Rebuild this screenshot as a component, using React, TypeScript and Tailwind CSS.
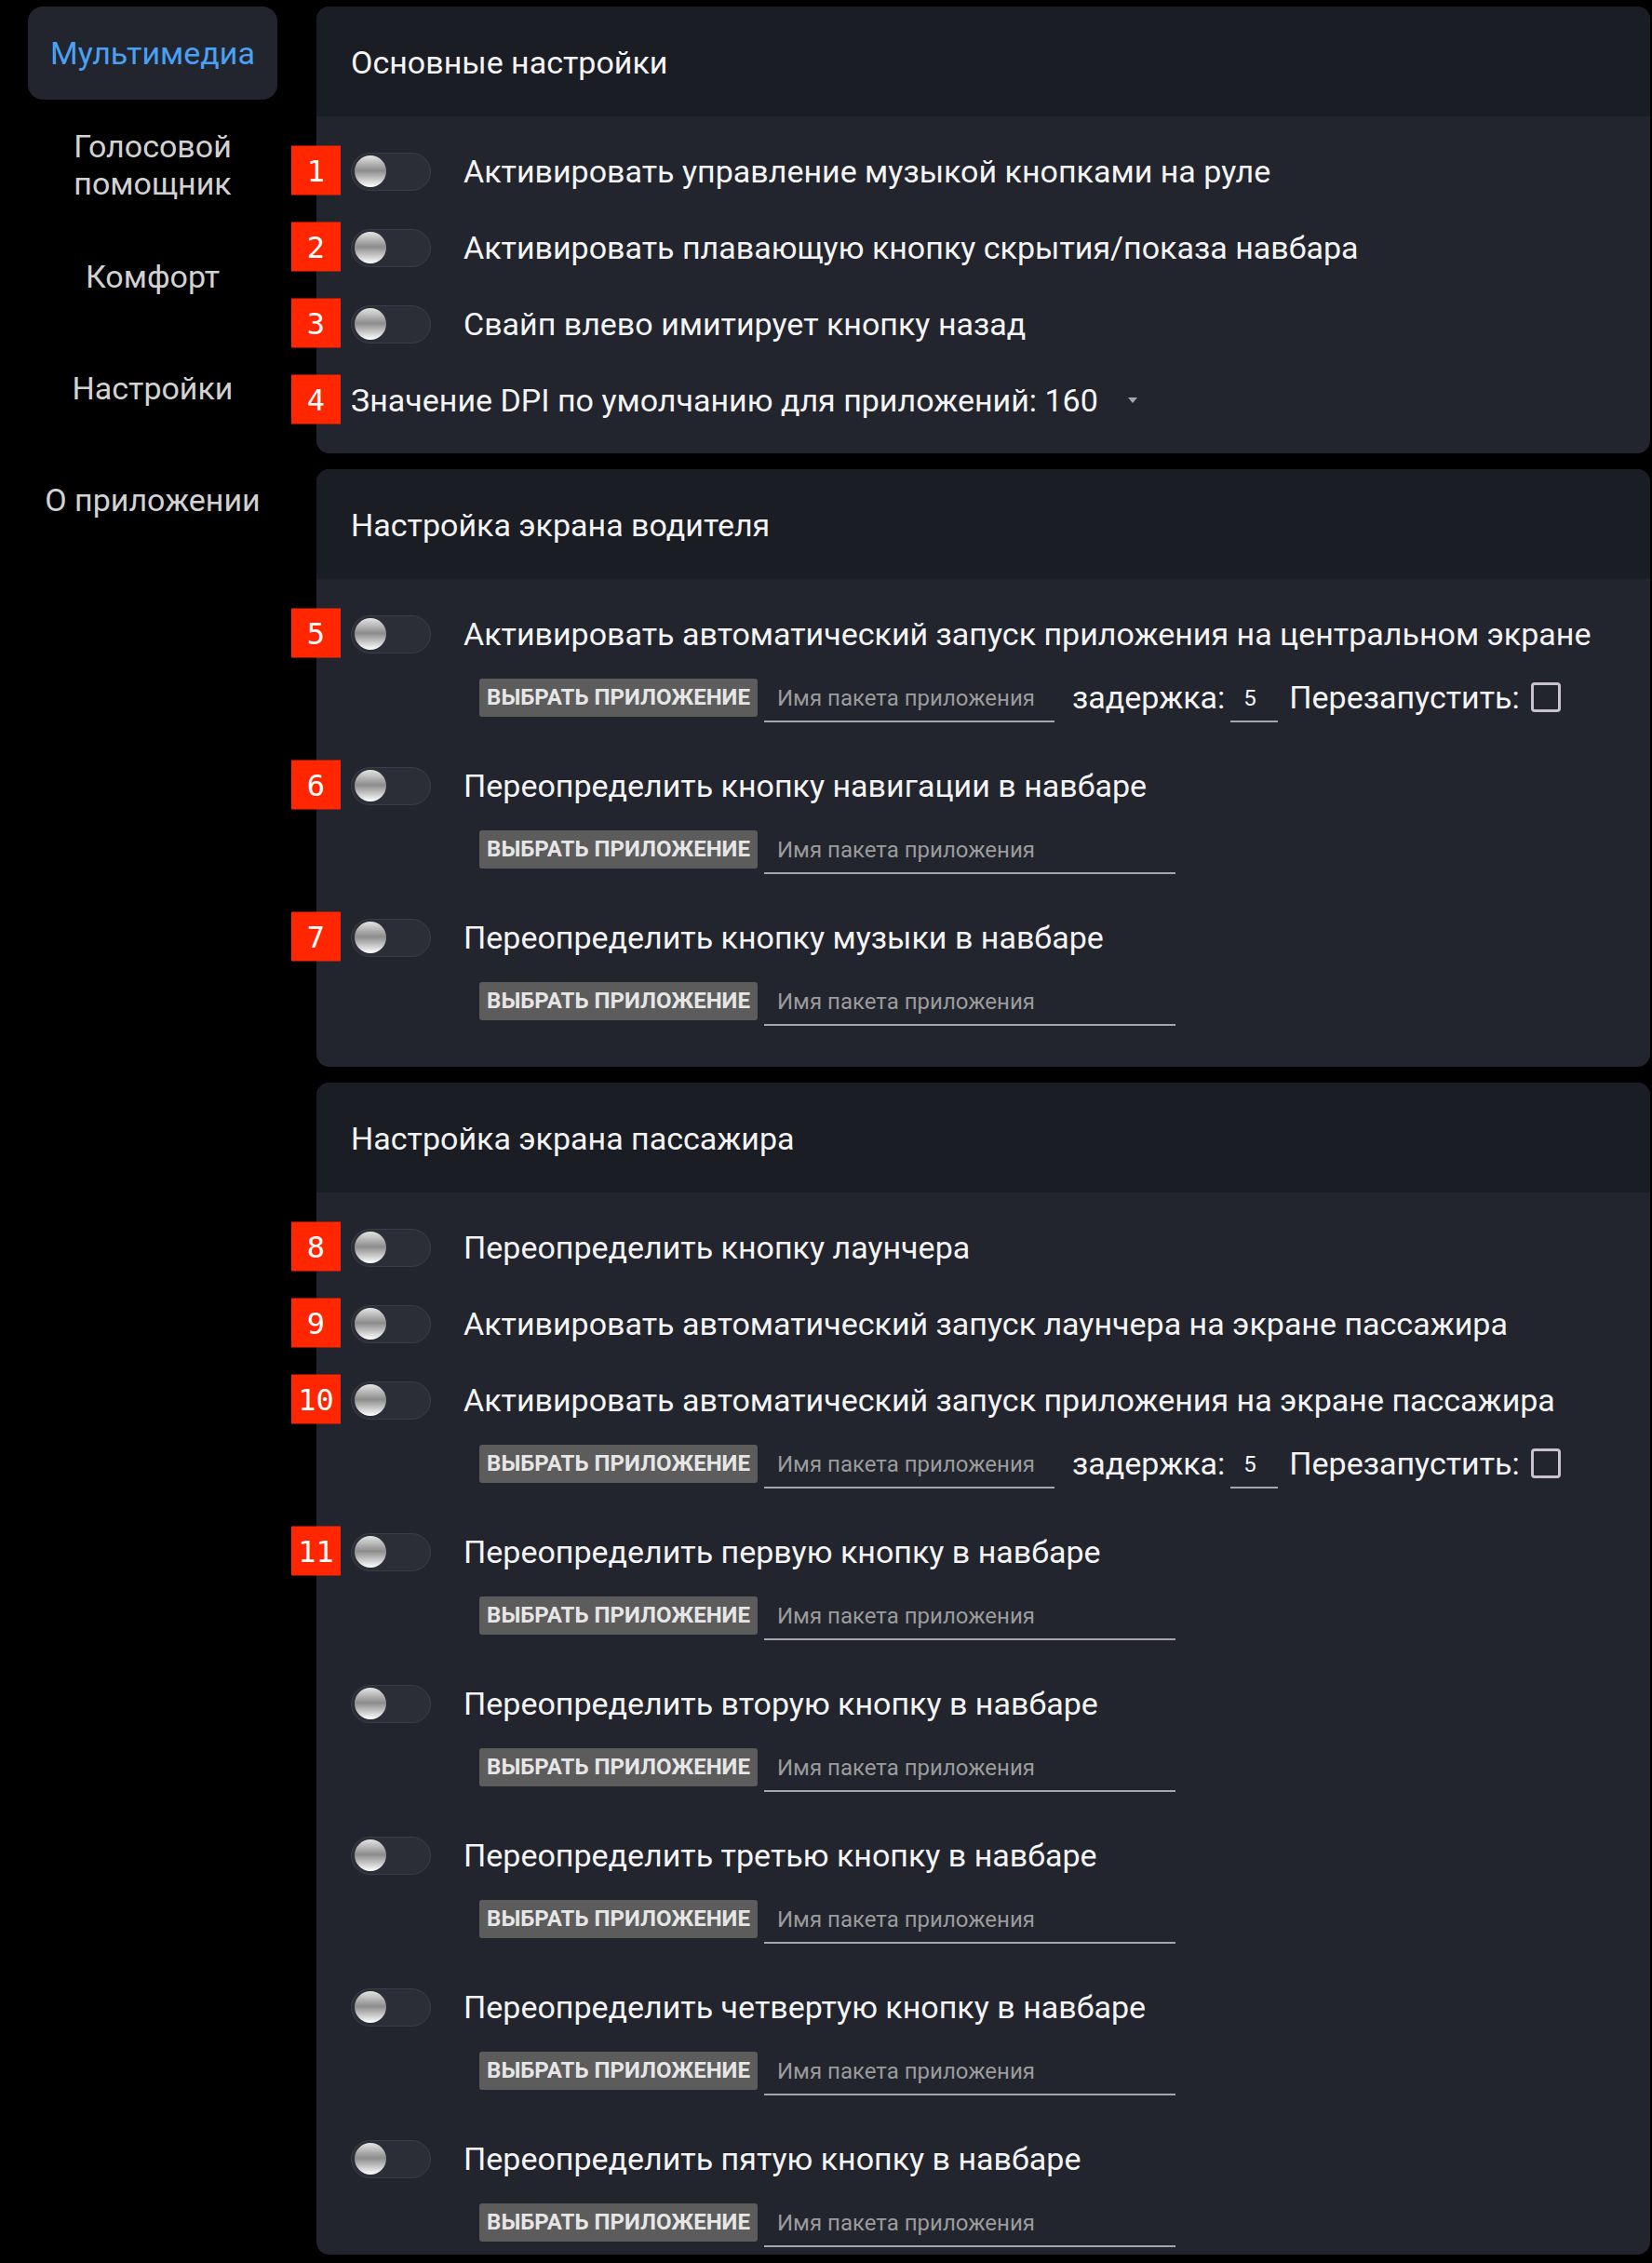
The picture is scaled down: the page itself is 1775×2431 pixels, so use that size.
import React from 'react'

type Item = {
  n?: number
  label: string
  sub?: boolean
  delay?: boolean
}

const menu = ['Мультимедиа', 'Голосовой помощник', 'Комфорт', 'Настройки', 'О приложении']

const driverItems: Item[] = [
  { n: 5, label: 'Активировать автоматический запуск приложения на центральном экране', sub: true, delay: true },
  { n: 6, label: 'Переопределить кнопку навигации в навбаре', sub: true },
  { n: 7, label: 'Переопределить кнопку музыки в навбаре', sub: true },
]

const passengerItems: Item[] = [
  { n: 8, label: 'Переопределить кнопку лаунчера' },
  { n: 9, label: 'Активировать автоматический запуск лаунчера на экране пассажира' },
  { n: 10, label: 'Активировать автоматический запуск приложения на экране пассажира', sub: true, delay: true },
  { n: 11, label: 'Переопределить первую кнопку в навбаре', sub: true },
  { label: 'Переопределить вторую кнопку в навбаре', sub: true },
  { label: 'Переопределить третью кнопку в навбаре', sub: true },
  { label: 'Переопределить четвертую кнопку в навбаре', sub: true },
  { label: 'Переопределить пятую кнопку в навбаре', sub: true },
]

function Badge({ n }: { n: number }) {
  return (
    <div className="absolute left-[-64px] top-1/2 -translate-y-1/2 w-[53px] h-[53px] bg-[#ff2600] flex items-center justify-center text-white text-[32px] leading-none font-['DejaVu_Sans_Mono',monospace]">
      {n}
    </div>
  )
}

function Toggle() {
  return (
    <div className="w-[86px] h-[41px] shrink-0 rounded-full bg-[#2b2e37] border border-[#3a3e48] flex items-center px-[3px]">
      <div className="w-[34px] h-[34px] rounded-full bg-[linear-gradient(to_bottom,#e4e4e4_0%,#8c8c8c_48%,#ffffff_100%)]" />
    </div>
  )
}

function ToggleRow({ item }: { item: Item }) {
  return (
    <div className="relative flex items-center h-[82px] pt-[2px]">
      {item.n !== undefined && <Badge n={item.n} />}
      <Toggle />
      <span className="ml-[35px] text-[34px] text-[#f4f4f4] whitespace-nowrap">{item.label}</span>
    </div>
  )
}

function SubRow({ delay }: { delay?: boolean }) {
  return (
    <div className="flex items-center h-[56px] pl-[138px]">
      <button className="h-[41px] w-[299px] shrink-0 rounded-[3px] bg-[#5c5c5c] text-[#e6e6e6] text-[24px] font-bold uppercase">
        Выбрать приложение
      </button>
      <input
        className={
          'ml-[7px] h-[54px] shrink-0 bg-transparent border-b-2 border-[#a9a5ad] px-[14px] pt-[3px] text-[24px] text-white placeholder:text-[#9b9b9b] outline-none ' +
          (delay ? 'w-[312px]' : 'w-[442px]')
        }
        placeholder="Имя пакета приложения"
      />
      {delay && (
        <>
          <span className="ml-[19px] text-[34px] text-[#f4f4f4]">задержка:</span>
          <input
            className="ml-[6px] w-[51px] h-[54px] shrink-0 bg-transparent border-b-2 border-[#a9a5ad] px-[14px] pt-[3px] text-[24px] text-[#f4f4f4] outline-none"
            defaultValue="5"
          />
          <span className="ml-[12px] text-[34px] text-[#f4f4f4]">Перезапустить:</span>
          <div className="ml-[12px] w-[32px] h-[32px] rounded-[4px] border-[3px] border-[#c9c1cd]" />
        </>
      )}
    </div>
  )
}

function Panel({ title, children, bodyClass }: { title: string; children: React.ReactNode; bodyClass: string }) {
  return (
    <div className="rounded-[14px] bg-[#22252e]">
      <div className="h-[118px] rounded-t-[14px] bg-[#1b1d24] px-[37px] pt-[2px] flex items-center text-[34px] text-[#f4f4f4]">
        {title}
      </div>
      <div className={'px-[37px] ' + bodyClass}>{children}</div>
    </div>
  )
}

function ItemBlock({ item, last }: { item: Item; last: boolean }) {
  return (
    <div className={item.sub && !last ? 'mb-[25px]' : ''}>
      <ToggleRow item={item} />
      {item.sub && <SubRow delay={item.delay} />}
    </div>
  )
}

export default function App() {
  return (
    <div className="min-h-screen bg-black flex font-['Roboto',sans-serif]">
      {/* sidebar */}
      <div className="w-[340px] shrink-0 pt-[7px] pl-[30px] pr-[42px] flex flex-col gap-[20px]">
        {menu.map((m, i) => (
          <div
            key={m}
            className={
              'h-[100px] rounded-[16px] flex items-center justify-center text-center text-[34px] leading-[40px] ' +
              (i === 0 ? 'bg-[#22252e] text-[#4aa0f2]' : 'text-[#d2d2d2]')
            }
          >
            {m === 'Голосовой помощник' ? (
              <span>
                Голосовой
                <br />
                помощник
              </span>
            ) : (
              m
            )}
          </div>
        ))}
      </div>

      {/* content */}
      <div className="flex-1 pt-[7px] pr-[2px] flex flex-col gap-[17px]">
        <Panel title="Основные настройки" bodyClass="py-[17px]">
          <ToggleRow item={{ n: 1, label: 'Активировать управление музыкой кнопками на руле' }} />
          <ToggleRow item={{ n: 2, label: 'Активировать плавающую кнопку скрытия/показа навбара' }} />
          <ToggleRow item={{ n: 3, label: 'Свайп влево имитирует кнопку назад' }} />
          <div className="relative flex items-center h-[82px] pt-[2px] text-[34px] text-[#f4f4f4]">
            <Badge n={4} />
            <span>Значение DPI по умолчанию для приложений: 160</span>
            <svg className="ml-[32px]" width="10" height="6" viewBox="0 0 10 6">
              <path d="M0 0 L10 0 L5 6 Z" fill="#a8a8a8" />
            </svg>
          </div>
        </Panel>

        <Panel title="Настройка экрана водителя" bodyClass="pt-[17px] pb-[43px]">
          {driverItems.map((it, i) => (
            <ItemBlock key={i} item={it} last={i === driverItems.length - 1} />
          ))}
        </Panel>

        <Panel title="Настройка экрана пассажира" bodyClass="pt-[17px] pb-[7px]">
          {passengerItems.map((it, i) => (
            <ItemBlock key={i} item={it} last={i === passengerItems.length - 1} />
          ))}
        </Panel>
      </div>
    </div>
  )
}
